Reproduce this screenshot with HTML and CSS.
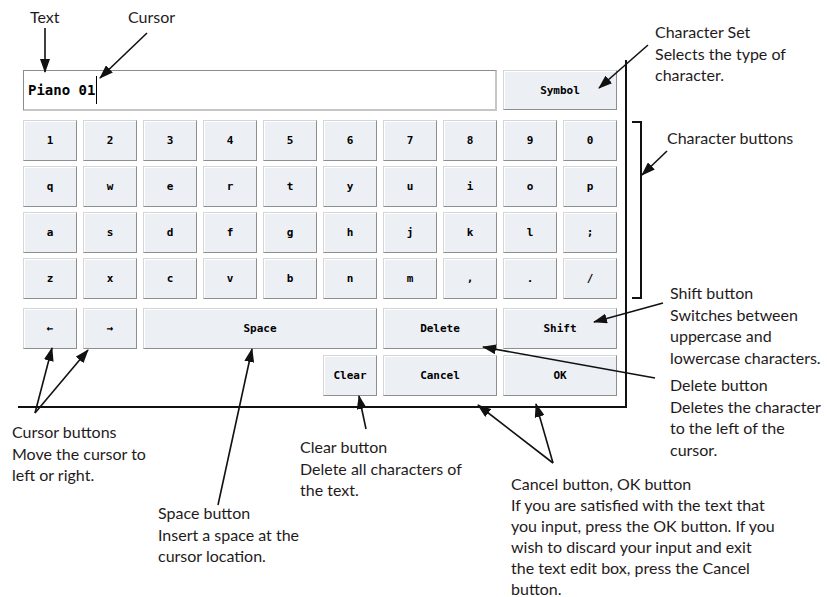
FILE: index.html
```html
<!DOCTYPE html>
<html lang="en">

<head>
    <meta charset="UTF-8">
    <meta name="viewport" content="width=device-width, initial-scale=1.0">
    <title>Text Edit</title>
    <link rel="stylesheet" href="styles.css">
</head>

<body>

    <div class="page">

        <div class="panel">
            <div class="field-row">
                <div class="text-field"><span class="value">Piano 01</span><span class="caret"></span></div>
                <button class="key wide">Symbol</button>
            </div>

            <div class="chars">
                <button class="key">1</button>
                <button class="key">2</button>
                <button class="key">3</button>
                <button class="key">4</button>
                <button class="key">5</button>
                <button class="key">6</button>
                <button class="key">7</button>
                <button class="key">8</button>
                <button class="key">9</button>
                <button class="key">0</button>

                <button class="key">q</button>
                <button class="key">w</button>
                <button class="key">e</button>
                <button class="key">r</button>
                <button class="key">t</button>
                <button class="key">y</button>
                <button class="key">u</button>
                <button class="key">i</button>
                <button class="key">o</button>
                <button class="key">p</button>

                <button class="key">a</button>
                <button class="key">s</button>
                <button class="key">d</button>
                <button class="key">f</button>
                <button class="key">g</button>
                <button class="key">h</button>
                <button class="key">j</button>
                <button class="key">k</button>
                <button class="key">l</button>
                <button class="key">;</button>

                <button class="key">z</button>
                <button class="key">x</button>
                <button class="key">c</button>
                <button class="key">v</button>
                <button class="key">b</button>
                <button class="key">n</button>
                <button class="key">m</button>
                <button class="key">,</button>
                <button class="key">.</button>
                <button class="key">/</button>
            </div>

            <div class="controls">
                <button class="key">&larr;</button>
                <button class="key">&rarr;</button>
                <button class="key space">Space</button>
                <button class="key wide">Delete</button>
                <button class="key wide">Shift</button>
                <button class="key clear">Clear</button>
                <button class="key wide">Cancel</button>
                <button class="key wide">OK</button>
            </div>
        </div>

        <!-- flechas e colchete das legendas -->
        <svg class="arrows" width="827" height="597" viewBox="0 0 827 597">
            <defs>
                <marker id="head" markerWidth="14" markerHeight="10" refX="13" refY="5" orient="auto"
                    markerUnits="userSpaceOnUse">
                    <path d="M0,0 L14,5 L0,10 Z" fill="#111" />
                </marker>
            </defs>
            <g stroke="#111" stroke-width="1.6" fill="none" marker-end="url(#head)">
                <line x1="45" y1="28" x2="45" y2="72" />
                <line x1="147" y1="33" x2="100" y2="78" />
                <line x1="648" y1="45" x2="599" y2="88" />
                <line x1="667" y1="151" x2="642" y2="175" />
                <line x1="663" y1="303" x2="594" y2="322" />
                <line x1="655" y1="378" x2="483" y2="347" />
                <line x1="366" y1="429" x2="359" y2="396" />
                <line x1="35" y1="413" x2="52" y2="348" />
                <line x1="35" y1="413" x2="88" y2="350" />
                <line x1="218" y1="505" x2="252" y2="349" />
                <line x1="553" y1="463" x2="478" y2="405" />
                <line x1="553" y1="463" x2="536" y2="404" />
            </g>
            <polyline points="632,122 641,122 641,298 632,298" stroke="#111" stroke-width="2" fill="none" />
        </svg>

        <p class="note note-text">Text</p>
        <p class="note note-cursor">Cursor</p>
        <p class="note note-charset">Character Set<br>Selects the type of<br>character.</p>
        <p class="note note-chars">Character buttons</p>
        <p class="note note-shift">Shift button<br>Switches between<br>uppercase and<br>lowercase characters.</p>
        <p class="note note-delete">Delete button<br>Deletes the character<br>to the left of the<br>cursor.</p>
        <p class="note note-clear">Clear button<br>Delete all characters of<br>the text.</p>
        <p class="note note-move">Cursor buttons<br>Move the cursor to<br>left or right.</p>
        <p class="note note-space">Space button<br>Insert a space at the<br>cursor location.</p>
        <p class="note note-ok">Cancel button, OK button<br>If you are satisfied with the text that<br>you input, press the OK
            button. If you<br>wish to discard your input and exit<br>the text edit box, press the Cancel<br>button.</p>

    </div>

</body>

</html>
```

FILE: styles.css
```css
body {
    margin: 0;
    background-color: #ffffff;
    color: #1f1b1c;
}

.page {
    position: relative;
    width: 827px;
    height: 597px;
    overflow: hidden;
}

.panel {
    margin: 60px 0 0 18px;
    width: 609px;
    height: 348px;
    box-sizing: border-box;
    padding: 10px 0 0 5px;
    border-right: 2px solid #111;
    border-bottom: 2px solid #111;
}

.field-row,
.chars,
.controls {
    display: grid;
    grid-template-columns: repeat(10, 54px);
    column-gap: 6px;
}

.field-row {
    grid-template-rows: 41px;
}

.chars {
    margin-top: 9px;
    grid-template-rows: repeat(4, 41px);
    row-gap: 5px;
}

.controls {
    margin-top: 9px;
    grid-template-rows: repeat(2, 41px);
    row-gap: 6px;
}

.text-field {
    grid-column: span 8;
    display: flex;
    align-items: center;
    box-sizing: border-box;
    padding-left: 4px;
    background-color: #ffffff;
    border: 1px solid #8c8c8c;
    border-right: 2px solid #c6c6c6;
    border-bottom: 2px solid #c6c6c6;
    font-family: 'DejaVu Sans Mono', monospace;
    font-weight: bold;
    font-size: 14px;
    color: #000000;
}

.caret {
    display: inline-block;
    width: 1px;
    height: 28px;
    margin-left: 1px;
    background-color: #000000;
}

.key {
    margin: 0;
    padding: 0;
    box-sizing: border-box;
    height: 41px;
    background-color: #eceff4;
    border: 1px solid;
    border-color: #d4d6da #8e8e8e #8e8e8e #d4d6da;
    box-shadow: inset 1px 1px 0 #ffffff;
    font-family: 'DejaVu Sans Mono', monospace;
    font-weight: bold;
    font-size: 11px;
    color: #000000;
}

.field-row .key {
    height: 40px;
}

.wide {
    grid-column: span 2;
}

.space {
    grid-column: span 4;
}

.clear {
    grid-column: 6;
}

.arrows {
    position: absolute;
    left: 0;
    top: 0;
    pointer-events: none;
}

.note {
    position: absolute;
    margin: 0;
    font-family: Lato, 'Open Sans', sans-serif;
    font-size: 16px;
    line-height: 21.5px;
    white-space: nowrap;
    color: #1f1b1c;
}

.note-text { left: 30px; top: 6px; }
.note-cursor { left: 128px; top: 6px; }
.note-charset { left: 655px; top: 21px; }
.note-chars { left: 667px; top: 127px; }
.note-shift { left: 670px; top: 282px; }
.note-delete { left: 670px; top: 374px; }
.note-clear { left: 300px; top: 436px; }
.note-move { left: 12px; top: 421px; }
.note-space { left: 158px; top: 502px; }
.note-ok { left: 511px; top: 473px; line-height: 21.1px; }
```
